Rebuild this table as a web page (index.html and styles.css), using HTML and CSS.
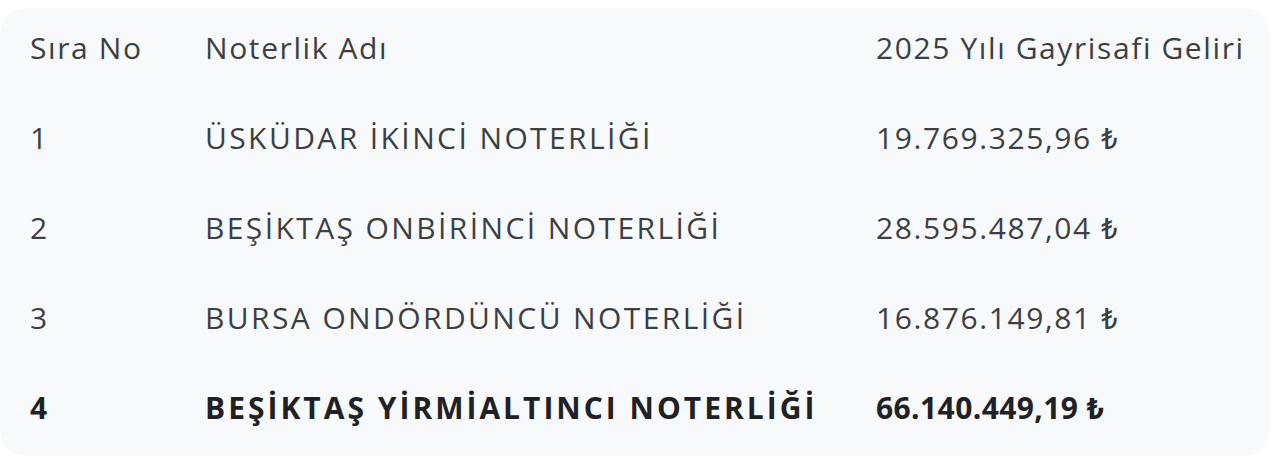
FILE: index.html
```html
<!DOCTYPE html>
<html lang="tr">
<head>
<meta charset="utf-8">
<link rel="stylesheet" href="styles.css">
</head>
<body>
<div class="card">
  <table class="tbl">
    <thead>
      <tr><th class="c1">Sıra No</th><th class="c2">Noterlik Adı</th><th class="c3">2025 Yılı Gayrisafi Geliri</th></tr>
    </thead>
    <tbody>
      <tr><td class="c1">1</td><td class="c2">ÜSKÜDAR İKİNCİ NOTERLİĞİ</td><td class="c3">19.769.325,96 ₺</td></tr>
      <tr><td class="c1">2</td><td class="c2">BEŞİKTAŞ ONBİRİNCİ NOTERLİĞİ</td><td class="c3">28.595.487,04 ₺</td></tr>
      <tr><td class="c1">3</td><td class="c2">BURSA ONDÖRDÜNCÜ NOTERLİĞİ</td><td class="c3">16.876.149,81 ₺</td></tr>
      <tr class="strong"><td class="c1">4</td><td class="c2">BEŞİKTAŞ YİRMİALTINCI NOTERLİĞİ</td><td class="c3">66.140.449,19 ₺</td></tr>
    </tbody>
  </table>
</div>
</body>
</html>
```
FILE: styles.css
```css
html, body { margin: 0; padding: 0; background: #ffffff; }
body { padding: 8px 10px 16px 0; font-family: "Open Sans", Roboto, sans-serif; }
.card {
  background: #f8f9fb;
  border-radius: 26px;
  padding: 0 0 0 30px;
  height: 448px;
  box-sizing: border-box;
}
.tbl { border-collapse: collapse; width: 100%; }
.tbl th, .tbl td {
  text-align: left;
  font-weight: 400;
  font-size: 30px;
  line-height: 40px;
  letter-spacing: 1.6px;
  color: #3c4043;
  height: 90px;
  padding: 0;
  white-space: nowrap;
}
.tbl thead th { height: 80px; padding-bottom: 5px; }
.tbl tbody .c2 { letter-spacing: 2.4px; }
.c1 { width: 175px; }
.c2 { width: 671px; }
.strong td { font-weight: 700; color: #202124; letter-spacing: 0.4px; }
.tbl tbody .strong .c2 { letter-spacing: 3px; }
```
